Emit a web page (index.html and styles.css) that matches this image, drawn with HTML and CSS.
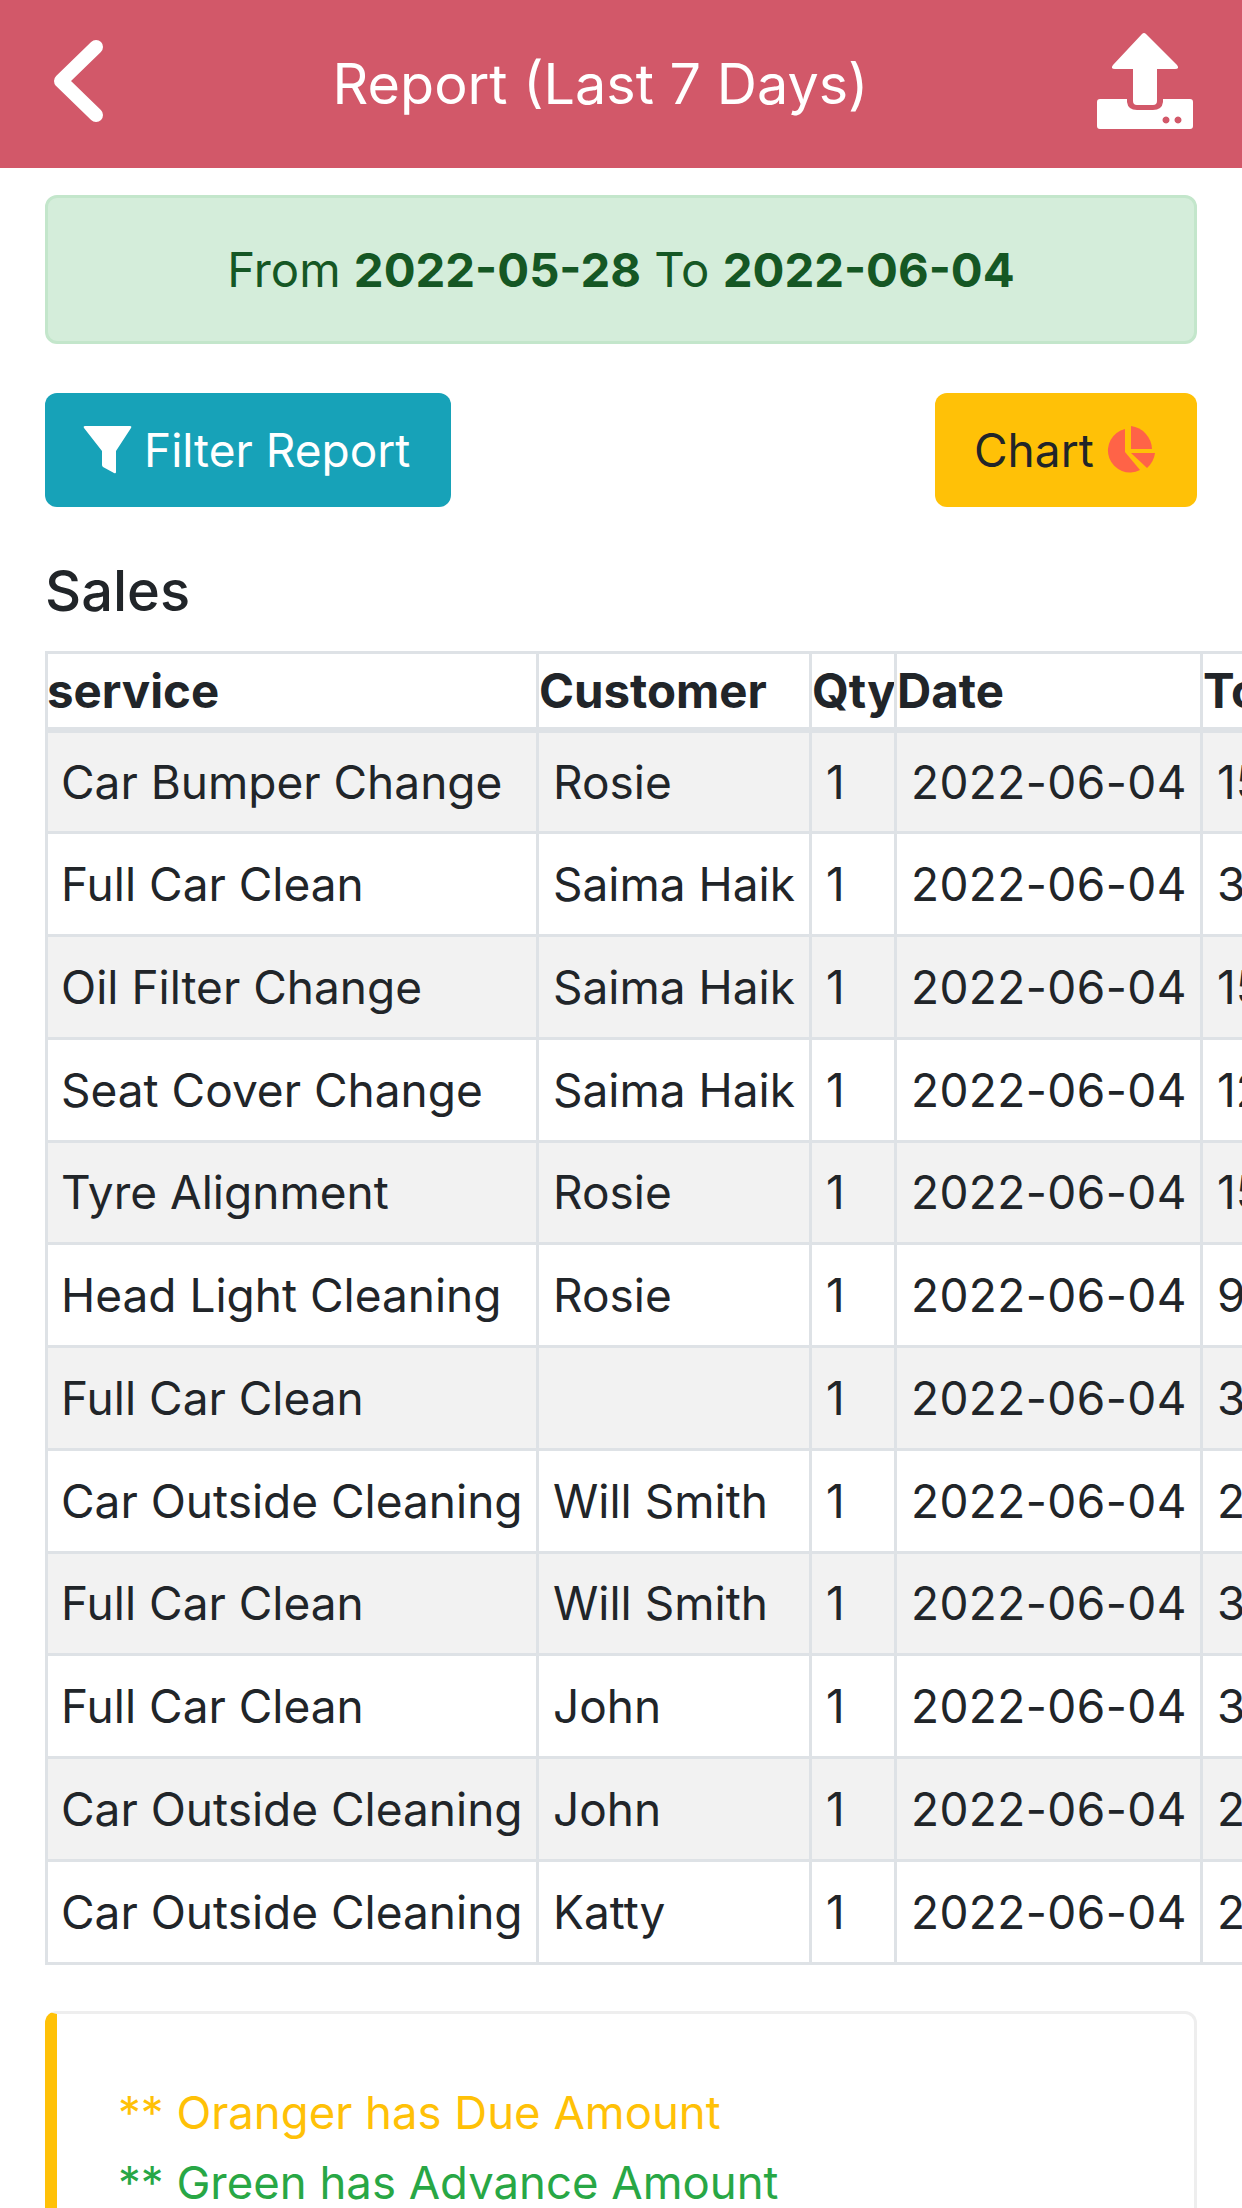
FILE: index.html
```html
<!DOCTYPE html>
<html lang="en">
<head>
    <meta charset="UTF-8">
    <meta name="viewport" content="width=device-width, initial-scale=1.0">
    <title>Report (Last 7 Days)</title>
    <link rel="stylesheet" href="styles.css">
</head>
<body>
    <header class="topbar">
        <a href="#" class="topbar-back" aria-label="Back">
            <svg class="icon-back" viewBox="0 0 52 84"><path d="M44 8 L9 42 L44 76" fill="none" stroke="#fff" stroke-width="14" stroke-linecap="round" stroke-linejoin="round"/></svg>
        </a>
        <h1 class="topbar-title">Report (Last 7 Days)</h1>
        <a href="#" class="topbar-export" aria-label="Export">
            <svg class="icon-upload" viewBox="0 0 96 96"><path fill="#fff" d="M47 0 Q48 0 49 1 L80 32 Q83 36 78 36 H60 V68 Q60 72 56 72 H40 Q36 72 36 68 V36 H18 Q13 36 16 32 L45 1 Q46 0 47 0 Z"/><path fill="#fff" fill-rule="evenodd" d="M3 66 H30 V69 Q31 77 40 77 H56 Q65 77 66 69 V66 H93 Q96 66 96 69 V93 Q96 96 93 96 H3 Q0 96 0 93 V69 Q0 66 3 66 Z M69 83.500 a3.500 3.500 0 1 0 0.010 0 Z M81 83.500 a3.500 3.500 0 1 0 0.010 0 Z"/></svg>
        </a>
    </header>

    <main class="content">
        <div class="alert-range">From <strong>2022-05-28</strong> To <strong>2022-06-04</strong></div>

        <div class="actions">
            <button class="btn btn-filter">
                <svg class="icon-filter" viewBox="0 0 49 48"><path fill="#fff" d="M2 0 H47 Q49 0 48 2 L33 25 V46 Q33 48 31 47 L20 41 Q19 40 19 39 V25 L1 2 Q0 0 2 0 Z"/></svg>
                Filter Report
            </button>
            <button class="btn btn-chart">
                Chart
                <svg class="icon-pie" viewBox="0 0 51 48"><path fill="#ff6347" d="M21 3 V26 L36 44 A22 22 0 1 1 21 3 Z"/><path fill="#ff6347" d="M27 0 A24 24 0 0 1 48 23 H27 Z"/><path fill="#ff6347" d="M27 27 H51 A24 24 0 0 1 43 42 Z"/></svg>
            </button>
        </div>

        <h2 class="section-title">Sales</h2>
    </main>

    <div class="table-wrap">
        <table class="report-table">
            <colgroup>
                <col class="col-service">
                <col class="col-customer">
                <col class="col-qty">
                <col class="col-date">
                <col class="col-total">
            </colgroup>
            <thead>
                <tr><th>service</th><th>Customer</th><th>Qty</th><th>Date</th><th>Total</th></tr>
            </thead>
            <tbody>
                <tr><td>Car Bumper Change</td><td>Rosie</td><td>1</td><td class="cell-date">2022-06-04</td><td>150</td></tr>
                <tr><td>Full Car Clean</td><td>Saima Haik</td><td>1</td><td class="cell-date">2022-06-04</td><td>300</td></tr>
                <tr><td>Oil Filter Change</td><td>Saima Haik</td><td>1</td><td class="cell-date">2022-06-04</td><td>150</td></tr>
                <tr><td>Seat Cover Change</td><td>Saima Haik</td><td>1</td><td class="cell-date">2022-06-04</td><td>120</td></tr>
                <tr><td>Tyre Alignment</td><td>Rosie</td><td>1</td><td class="cell-date">2022-06-04</td><td>150</td></tr>
                <tr><td>Head Light Cleaning</td><td>Rosie</td><td>1</td><td class="cell-date">2022-06-04</td><td>90</td></tr>
                <tr><td>Full Car Clean</td><td></td><td>1</td><td class="cell-date">2022-06-04</td><td>300</td></tr>
                <tr><td>Car Outside Cleaning</td><td>Will Smith</td><td>1</td><td class="cell-date">2022-06-04</td><td>200</td></tr>
                <tr><td>Full Car Clean</td><td>Will Smith</td><td>1</td><td class="cell-date">2022-06-04</td><td>300</td></tr>
                <tr><td>Full Car Clean</td><td>John</td><td>1</td><td class="cell-date">2022-06-04</td><td>300</td></tr>
                <tr><td>Car Outside Cleaning</td><td>John</td><td>1</td><td class="cell-date">2022-06-04</td><td>200</td></tr>
                <tr><td>Car Outside Cleaning</td><td>Katty</td><td>1</td><td class="cell-date">2022-06-04</td><td>200</td></tr>
            </tbody>
        </table>
    </div>

    <div class="note-card">
        <p class="note note-due">** Oranger has Due Amount</p>
        <p class="note note-advance">** Green has Advance Amount</p>
    </div>
</body>
</html>
```
FILE: styles.css
```css
html {
    height: 100%;
    overflow: hidden;
}
body {
    font-family: Inter, 'Noto Sans', Arial, sans-serif;
    color: #212529;
    margin: 0;
    padding: 0;
    background-color: #fff;
    font-size: 46px;
    height: 100%;
    overflow: hidden;
}
.topbar {
    background-color: #d25869;
    height: 168px;
    padding: 0 49px 0 52px;
    display: flex;
    justify-content: space-between;
    align-items: center;
    box-sizing: border-box;
}
.topbar-back,
.topbar-export {
    display: flex;
    margin-bottom: 6px;
}
.icon-back {
    width: 52px;
    height: 84px;
}
.icon-upload {
    width: 96px;
    height: 96px;
}
.topbar-title {
    color: #fff;
    font-size: 55.7px;
    font-weight: 400;
    margin: 0 0 2px;
}
.content {
    padding: 27px 45px 0;
}
.alert-range {
    background-color: #d4edda;
    border: 3px solid #c3e6cb;
    border-radius: 12px;
    color: #155724;
    height: 149px;
    box-sizing: border-box;
    display: flex;
    align-items: center;
    justify-content: center;
    gap: 0.28em;
    font-size: 47.3px;
}
.alert-range strong {
    font-weight: 700;
}
.actions {
    display: flex;
    justify-content: space-between;
    margin-top: 49px;
}
.btn {
    height: 114px;
    border: none;
    border-radius: 12px;
    font-family: inherit;
    font-size: 46px;
    display: flex;
    align-items: center;
    padding: 0;
}
.btn-filter {
    width: 406px;
    background-color: #17a2b8;
    color: #fff;
    padding-left: 38px;
    gap: 12px;
}
.btn-chart {
    width: 262px;
    background-color: #ffc107;
    color: #212529;
    padding-left: 39px;
    gap: 10px;
}
.icon-filter {
    width: 49px;
    height: 48px;
}
.icon-pie {
    width: 51px;
    height: 48px;
}
.section-title {
    font-size: 56px;
    font-weight: 500;
    margin: 52px 0 0;
    line-height: 64px;
}
.table-wrap {
    margin: 28px 0 0 45px;
    overflow: hidden;
}
.report-table {
    border-collapse: collapse;
    table-layout: fixed;
    width: 1305px;
}
.col-service { width: 491px; }
.col-customer { width: 273px; }
.col-qty { width: 85px; }
.col-date { width: 306px; }
.col-total { width: 150px; }
.report-table th,
.report-table td {
    border: 3px solid #dee2e6;
    white-space: nowrap;
    overflow: hidden;
    text-align: left;
}
.report-table th {
    height: 73px;
    padding: 0;
    font-size: 47.4px;
    font-weight: 700;
    border-bottom-width: 6px;
}
.report-table th:first-child {
    text-indent: -1px;
}
.report-table td {
    height: 102.75px;
    box-sizing: border-box;
    padding: 0 13px;
}
.report-table td:nth-child(n+2) {
    padding-left: 14px;
}
.report-table .cell-date {
    letter-spacing: 0.4px;
}
.report-table tbody tr:nth-child(odd) {
    background-color: #f2f2f2;
}
.note-card {
    margin: 46px 45px 0;
    border: 3px solid #eeeeee;
    border-left: 12px solid #ffc107;
    border-radius: 12px;
    padding: 64px 60px 60px;
}
.note {
    margin: 0;
    padding-left: 1px;
    font-size: 45.5px;
    line-height: 70px;
}
.note-due {
    color: #ffc107;
}
.note-advance {
    color: #28a745;
}
```
